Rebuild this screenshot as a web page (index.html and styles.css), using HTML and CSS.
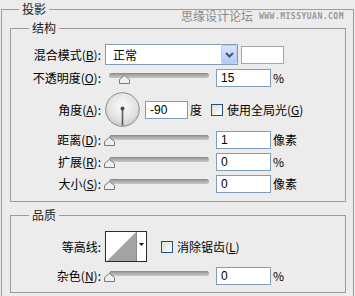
FILE: index.html
```html
<!DOCTYPE html>
<html lang="zh-cn">
<head>
    <meta charset="UTF-8">
    <title>投影</title>
    <link rel="stylesheet" href="styles.css">
</head>
<body>
    <div class="watermark"><span class="wm-cn">思缘设计论坛</span><span class="wm-en">WWW.MISSYUAN.COM</span></div>

    <fieldset class="panel">
        <legend>投影</legend>

        <fieldset class="section">
            <legend>结构</legend>

            <div class="row row-blend">
                <label class="lbl">混合模式(<u>B</u>):</label>
                <div class="select">
                    <span>正常</span>
                    <span class="select-btn">
                        <svg width="9" height="6" viewBox="0 0 9 6"><path d="M1 1 L4.5 4.5 L8 1" fill="none" stroke="#3f5378" stroke-width="2"/></svg>
                    </span>
                </div>
                <div class="swatch"></div>
            </div>

            <div class="row">
                <label class="lbl">不透明度(<u>O</u>):</label>
                <div class="slider">
                    <div class="track"></div>
                    <svg class="thumb" style="left: 19px" width="11" height="9" viewBox="0 0 11 9"><polygon points="5.5,0.5 10.5,4.5 10.5,8.5 0.5,8.5 0.5,4.5" fill="#efefef" stroke="#7a7a7a"/></svg>
                </div>
                <input class="num" type="text" value="15">
                <span class="unit">%</span>
            </div>

            <div class="row row-angle">
                <label class="lbl">角度(<u>A</u>):</label>
                <svg class="dial" width="35" height="35" viewBox="0 0 35 35">
                    <defs>
                        <radialGradient id="dialFill" cx="50%" cy="40%" r="60%">
                            <stop offset="0" stop-color="#fbfbfb"/>
                            <stop offset="0.7" stop-color="#e2e2e2"/>
                            <stop offset="1" stop-color="#c9c9c9"/>
                        </radialGradient>
                    </defs>
                    <circle cx="17.5" cy="17.5" r="16.8" fill="url(#dialFill)" stroke="#8c8c8c"/>
                    <line x1="17.5" y1="16.5" x2="17.5" y2="33.5" stroke="#5a5a5a" stroke-width="1.6"/>
                    <circle cx="17.5" cy="16.5" r="2" fill="#4a4a4a"/>
                </svg>
                <input class="num num-angle" type="text" value="-90">
                <span class="unit">度</span>
                <span class="check check-global"></span>
                <span class="check-text">使用全局光(<u>G</u>)</span>
            </div>

            <div class="row row-dist">
                <label class="lbl">距离(<u>D</u>):</label>
                <div class="slider">
                    <div class="track"></div>
                    <svg class="thumb" style="left: 4px" width="11" height="9" viewBox="0 0 11 9"><polygon points="5.5,0.5 10.5,4.5 10.5,8.5 0.5,8.5 0.5,4.5" fill="#efefef" stroke="#7a7a7a"/></svg>
                </div>
                <input class="num" type="text" value="1">
                <span class="unit">像素</span>
            </div>

            <div class="row">
                <label class="lbl">扩展(<u>R</u>):</label>
                <div class="slider">
                    <div class="track"></div>
                    <svg class="thumb" style="left: 4px" width="11" height="9" viewBox="0 0 11 9"><polygon points="5.5,0.5 10.5,4.5 10.5,8.5 0.5,8.5 0.5,4.5" fill="#efefef" stroke="#7a7a7a"/></svg>
                </div>
                <input class="num" type="text" value="0">
                <span class="unit">%</span>
            </div>

            <div class="row">
                <label class="lbl">大小(<u>S</u>):</label>
                <div class="slider">
                    <div class="track"></div>
                    <svg class="thumb" style="left: 4px" width="11" height="9" viewBox="0 0 11 9"><polygon points="5.5,0.5 10.5,4.5 10.5,8.5 0.5,8.5 0.5,4.5" fill="#efefef" stroke="#7a7a7a"/></svg>
                </div>
                <input class="num" type="text" value="0">
                <span class="unit">像素</span>
            </div>
        </fieldset>

        <fieldset class="section section-quality">
            <legend>品质</legend>

            <div class="row row-contour">
                <label class="lbl">等高线:</label>
                <svg class="contour" width="42" height="31" viewBox="0 0 42 31">
                    <rect x="0.5" y="0.5" width="41" height="30" fill="#fff" stroke="#2b2b2b"/>
                    <polygon points="2,30 31,1 31,30" fill="#a3a3a3"/>
                    <line x1="31.5" y1="1" x2="31.5" y2="30" stroke="#8a8a8a"/>
                    <polygon points="34,12 39,12 36.5,15" fill="#111"/>
                </svg>
                <span class="check check-aa"></span>
                <span class="check-text">消除锯齿(<u>L</u>)</span>
            </div>

            <div class="row row-noise">
                <label class="lbl">杂色(<u>N</u>):</label>
                <div class="slider">
                    <div class="track"></div>
                    <svg class="thumb" style="left: 4px" width="11" height="9" viewBox="0 0 11 9"><polygon points="5.5,0.5 10.5,4.5 10.5,8.5 0.5,8.5 0.5,4.5" fill="#efefef" stroke="#7a7a7a"/></svg>
                </div>
                <input class="num" type="text" value="0">
                <span class="unit">%</span>
            </div>
        </fieldset>
    </fieldset>
</body>
</html>
```

FILE: styles.css
```css
* {
    box-sizing: border-box;
}

body {
    margin: 0;
    width: 355px;
    height: 296px;
    overflow: hidden;
    position: relative;
    background-color: #ececec;
    font-family: "Noto Sans CJK SC", "Liberation Sans", sans-serif;
    font-size: 12px;
    color: #000000;
}

u {
    text-decoration: underline;
}

/* group boxes */
.panel {
    margin: 2px 0 0 1px;
    width: 353px;
    height: 296px;
    padding: 0 7px 0 8px;
    border: 1px solid #9c9c9c;
}

legend {
    padding: 0 3px;
    line-height: 14px;
    font-size: 12px;
    color: #222222;
}

.panel > legend {
    margin-left: 9px;
}

.section {
    margin: 5px 0 0 0;
    padding: 0 0 8px 0;
    border: 1px solid #9c9c9c;
}

.section > legend {
    margin-left: 18px;
}

.section-quality {
    margin-top: 6px;
    padding-bottom: 7px;
}

/* rows */
.row {
    display: flex;
    align-items: center;
    height: 18px;
    margin-top: 4px;
}

.row-blend {
    height: 21px;
    margin-top: 9px;
}

.row-angle {
    height: 35px;
    margin-top: 5px;
}

.row-dist {
    margin-top: 4px;
}

.row-contour {
    height: 31px;
    margin-top: 9px;
}

.row-noise {
    margin-top: 5px;
}

.lbl {
    flex: none;
    width: 90px;
    margin-right: 4px;
    text-align: right;
    white-space: nowrap;
    line-height: 14px;
}

/* blend select */
.select {
    display: flex;
    align-items: center;
    width: 133px;
    height: 21px;
    padding-left: 7px;
    border: 1px solid #7f9db9;
    background: #ffffff;
}

.select-btn {
    display: flex;
    align-items: center;
    justify-content: center;
    margin-left: auto;
    width: 16px;
    height: 19px;
    border: 1px solid #b8cbf2;
    border-radius: 2px;
    background: linear-gradient(#d9e4fc, #b6cbf5);
}

.swatch {
    width: 43px;
    height: 18px;
    margin-left: 3px;
    border: 1px solid #a5a5a5;
    background: #ffffff;
}

/* sliders */
.slider {
    flex: none;
    position: relative;
    width: 107px;
    height: 18px;
    margin-right: 4px;
}

.track {
    position: absolute;
    left: 4px;
    right: 3px;
    top: 4px;
    height: 5px;
    border-radius: 3px;
    background: linear-gradient(#858585, #acacac 45%, #c6c6c6);
}

.thumb {
    position: absolute;
    top: 6px;
    margin-left: -5px;
}

/* number fields */
.num {
    width: 55px;
    height: 18px;
    padding: 0 4px;
    border: 1px solid #7f9db9;
    background: #ffffff;
    font-family: "Liberation Sans", sans-serif;
    font-size: 12px;
    color: #000000;
    outline: none;
}

.num-angle {
    width: 43px;
    margin-left: 5px;
}

.unit {
    margin-left: 2px;
    line-height: 14px;
}

/* angle dial */
.dial {
    flex: none;
}

/* checkboxes */
.check {
    flex: none;
    width: 12px;
    height: 12px;
    border: 1px solid #1c5180;
    background: linear-gradient(135deg, #dcdcd6, #ffffff);
}

.check-global {
    margin-left: 9px;
}

.check-aa {
    margin-left: 14px;
}

.check-text {
    margin-left: 4px;
    line-height: 14px;
}

.contour {
    flex: none;
}

/* watermark */
.watermark {
    position: absolute;
    top: 8px;
    right: 11px;
    display: flex;
    align-items: center;
    gap: 6px;
    color: #8a8a8a;
}

.wm-cn {
    font-size: 12px;
    line-height: 16px;
}

.wm-en {
    font-family: "DejaVu Sans Mono", monospace;
    font-weight: bold;
    font-size: 8px;
    letter-spacing: 0.5px;
    color: #9a9a9a;
}
```
